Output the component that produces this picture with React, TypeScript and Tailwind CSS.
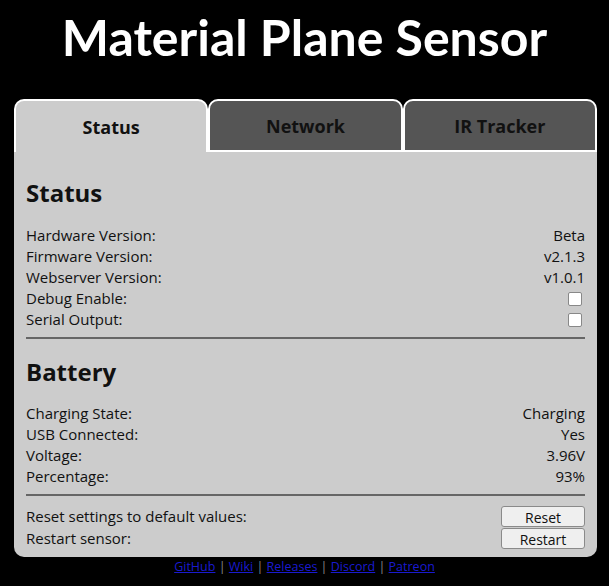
import React from "react";

type Row = { label: string; value?: string; check?: boolean };

const statusRows: Row[] = [
  { label: "Hardware Version:", value: "Beta" },
  { label: "Firmware Version:", value: "v2.1.3" },
  { label: "Webserver Version:", value: "v1.0.1" },
  { label: "Debug Enable:", check: true },
  { label: "Serial Output:", check: true },
];

const batteryRows: Row[] = [
  { label: "Charging State:", value: "Charging" },
  { label: "USB Connected:", value: "Yes" },
  { label: "Voltage:", value: "3.96V" },
  { label: "Percentage:", value: "93%" },
];

const links = ["GitHub", "Wiki", "Releases", "Discord", "Patreon"];

function Rows({ rows }: { rows: Row[] }) {
  return (
    <div className="flex flex-col">
      {rows.map((r) => (
        <div key={r.label} className="flex h-[21px] items-center justify-between">
          <span>{r.label}</span>
          {r.check ? (
            <span className="mr-[3px] h-[14px] w-[14px] rounded-[2px] border border-[#888] bg-white" />
          ) : (
            <span>{r.value}</span>
          )}
        </div>
      ))}
    </div>
  );
}

export default function App() {
  return (
    <div className="min-h-screen bg-black font-['Open_Sans',sans-serif] text-[#111]">
      <h1 className="h-[99px] pt-[5px] text-center font-['Lato',sans-serif] text-[50px] leading-[64px] font-bold text-white">
        Material Plane Sensor
      </h1>

      <div className="ml-[14px] w-[583px]">
        {/* tabs */}
        <div className="flex h-[53px]">
          <div className="flex flex-1 items-center justify-center rounded-t-[10px] border-2 border-b-0 border-white bg-[#cccccc] pt-[2px] text-[18px] font-bold">
            Status
          </div>
          <div className="flex flex-1 items-center justify-center rounded-t-[10px] border-2 border-white bg-[#555555] pt-[2px] text-[18px] font-bold">
            Network
          </div>
          <div className="flex flex-1 items-center justify-center rounded-t-[10px] border-2 border-white bg-[#555555] pt-[2px] text-[18px] font-bold">
            IR Tracker
          </div>
        </div>

        {/* panel */}
        <div className="rounded-b-[10px] bg-[#cccccc] px-[12px] pt-[26px] pb-[8px] text-[15px]">
          <h2 className="mb-[17px] text-[24px] leading-[30px] font-bold">Status</h2>
          <Rows rows={statusRows} />
          <div className="mt-[7px] mb-[18px] h-[2px] bg-[#666]" />
          <h2 className="mb-[16px] text-[24px] leading-[30px] font-bold">Battery</h2>
          <Rows rows={batteryRows} />
          <div className="mt-[7px] mb-[10px] h-[2px] bg-[#666]" />
          <div className="flex flex-col gap-[1px]">
            <div className="flex h-[21px] items-center justify-between">
              <span>Reset settings to default values:</span>
              <button className="h-[21px] w-[84px] rounded-[3px] border border-[#8a8a8a] bg-[#efefef] text-[14px]">
                Reset
              </button>
            </div>
            <div className="flex h-[21px] items-center justify-between">
              <span>Restart sensor:</span>
              <button className="h-[21px] w-[84px] rounded-[3px] border border-[#8a8a8a] bg-[#efefef] text-[14px]">
                Restart
              </button>
            </div>
          </div>
        </div>
      </div>

      <div className="text-center text-[12.5px] leading-[20px] text-[#888]">
        {links.map((l, i) => (
          <span key={l}>
            {i > 0 && " | "}
            <a href="#" className="text-[#1a1ad0] underline">
              {l}
            </a>
          </span>
        ))}
      </div>
    </div>
  );
}
